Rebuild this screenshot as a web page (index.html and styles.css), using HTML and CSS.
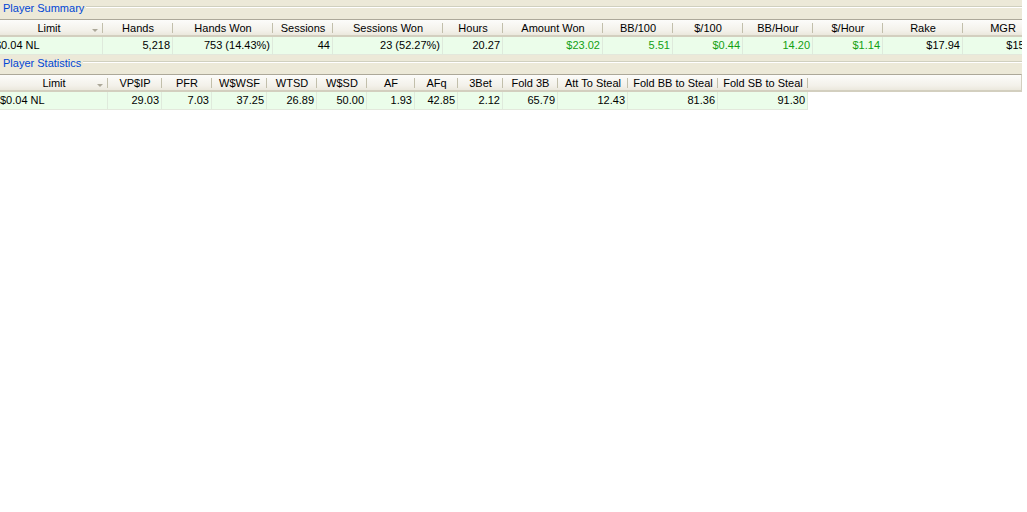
FILE: index.html
```html
<!DOCTYPE html>
<html>
<head>
<meta charset="utf-8">
<title>Player Report</title>
<link rel="stylesheet" href="styles.css">
</head>
<body>
<div class="panel">
  <section class="group summary">
    <div class="group-title"><span>Player Summary</span></div>
    <div class="scroller">
      <table class="grid">
        <colgroup>
          <col class="c108"><col class="c70"><col class="c100"><col class="c60"><col class="c110"><col class="c60">
          <col class="c100"><col class="c70"><col class="c70"><col class="c70"><col class="c70"><col class="c80"><col class="c80">
        </colgroup>
        <thead>
          <tr>
            <th class="sorted">Limit</th><th>Hands</th><th>Hands Won</th><th>Sessions</th><th>Sessions Won</th><th>Hours</th>
            <th>Amount Won</th><th>BB/100</th><th>$/100</th><th>BB/Hour</th><th>$/Hour</th><th>Rake</th><th>MGR</th>
          </tr>
        </thead>
        <tbody>
          <tr>
            <td class="left">$0.04 NL</td><td>5,218</td><td>753 (14.43%)</td><td>44</td><td>23 (52.27%)</td><td>20.27</td>
            <td class="win">$23.02</td><td class="win">5.51</td><td class="win">$0.44</td><td class="win">14.20</td><td class="win">$1.14</td><td>$17.94</td><td>$15.64</td>
          </tr>
        </tbody>
      </table>
    </div>
  </section>

  <section class="group stats">
    <div class="group-title"><span>Player Statistics</span></div>
    <table class="grid full">
      <colgroup>
        <col class="c108"><col class="c54"><col class="c50"><col class="c55"><col class="c50"><col class="c50"><col class="c48">
        <col class="c43"><col class="c45"><col class="c55"><col class="c70"><col class="c90"><col class="c90"><col>
      </colgroup>
      <thead>
        <tr>
          <th class="sorted">Limit</th><th>VP$IP</th><th>PFR</th><th>W$WSF</th><th>WTSD</th><th>W$SD</th><th>AF</th>
          <th>AFq</th><th>3Bet</th><th>Fold 3B</th><th>Att To Steal</th><th>Fold BB to Steal</th><th>Fold SB to Steal</th><th class="filler"></th>
        </tr>
      </thead>
      <tbody>
        <tr>
          <td class="left">$0.04 NL</td><td>29.03</td><td>7.03</td><td>37.25</td><td>26.89</td><td>50.00</td><td>1.93</td>
          <td>42.85</td><td>2.12</td><td>65.79</td><td>12.43</td><td>81.36</td><td>91.30</td><td class="filler"></td>
        </tr>
      </tbody>
    </table>
    <div class="list-body"></div>
  </section>
</div>
</body>
</html>
```

FILE: styles.css
```css
html, body {
  margin: 0;
  background: #ffffff;
}

body {
  font-family: "Liberation Sans", Arial, sans-serif;
  font-size: 11px;
  color: #000000;
}

.panel {
  width: 1022px;
  height: 512px;
  background: #ece9d8;
  display: flex;
  flex-direction: column;
}

/* group box caption with the etched rule running to the right */
.group-title {
  height: 19px;
  display: flex;
  align-items: flex-start;
}

.group-title span {
  color: #0046d5;
  line-height: 13px;
  padding: 2px 2px 0 3px;
  white-space: nowrap;
}

.group-title::after {
  content: "";
  flex: 1;
  margin-top: 6px;
  border-top: 1px solid #d0d0bf;
  border-bottom: 1px solid #ffffff;
}

.stats {
  flex: 1;
  display: flex;
  flex-direction: column;
}

.scroller {
  overflow: hidden;
}

/* list view grid */
.grid {
  border-collapse: separate;
  border-spacing: 0;
  table-layout: fixed;
}

.summary .grid {
  width: 1048px;
  margin-left: -5px;
}

.grid.full {
  width: 100%;
}

.c43 { width: 43px; }
.c45 { width: 45px; }
.c48 { width: 48px; }
.c50 { width: 50px; }
.c54 { width: 54px; }
.c55 { width: 55px; }
.c60 { width: 60px; }
.c70 { width: 70px; }
.c80 { width: 80px; }
.c90 { width: 90px; }
.c100 { width: 100px; }
.c108 { width: 108px; }
.c110 { width: 110px; }

.grid th {
  position: relative;
  padding: 1px 4px 0;
  line-height: 14px;
  font-weight: normal;
  text-align: center;
  white-space: nowrap;
  overflow: hidden;
  background: linear-gradient(#fcfcfa, #f3f1ea 70%, #ebe8dd);
  border-top: 1px solid #aca899;
  border-bottom: 2px solid #d3cfbf;
}

/* column divider in the header */
.grid th::before {
  content: "";
  position: absolute;
  right: 0;
  top: 3px;
  bottom: 2px;
  width: 1px;
  background: #c2bfab;
}

.grid th.filler::before {
  display: none;
}

.grid th.filler {
  border-right: 1px solid #d3cfbf;
}

/* sort indicator */
.grid th.sorted::after {
  content: "";
  position: absolute;
  right: 5px;
  top: 9px;
  border-left: 3px solid transparent;
  border-right: 3px solid transparent;
  border-top: 3px solid #aca899;
}

.grid td {
  padding: 1px 2px;
  line-height: 15px;
  text-align: right;
  white-space: nowrap;
  overflow: hidden;
  background: #ebfdea;
  border-right: 1px solid #dfeadc;
  border-bottom: 1px solid #e3e8dc;
}

.grid td.left {
  text-align: left;
  padding-left: 0;
}

.grid td.win {
  color: #12a012;
}

.grid td.filler {
  background: #ffffff;
  border: 0;
}

.list-body {
  flex: 1;
  background: #ffffff;
}
```
